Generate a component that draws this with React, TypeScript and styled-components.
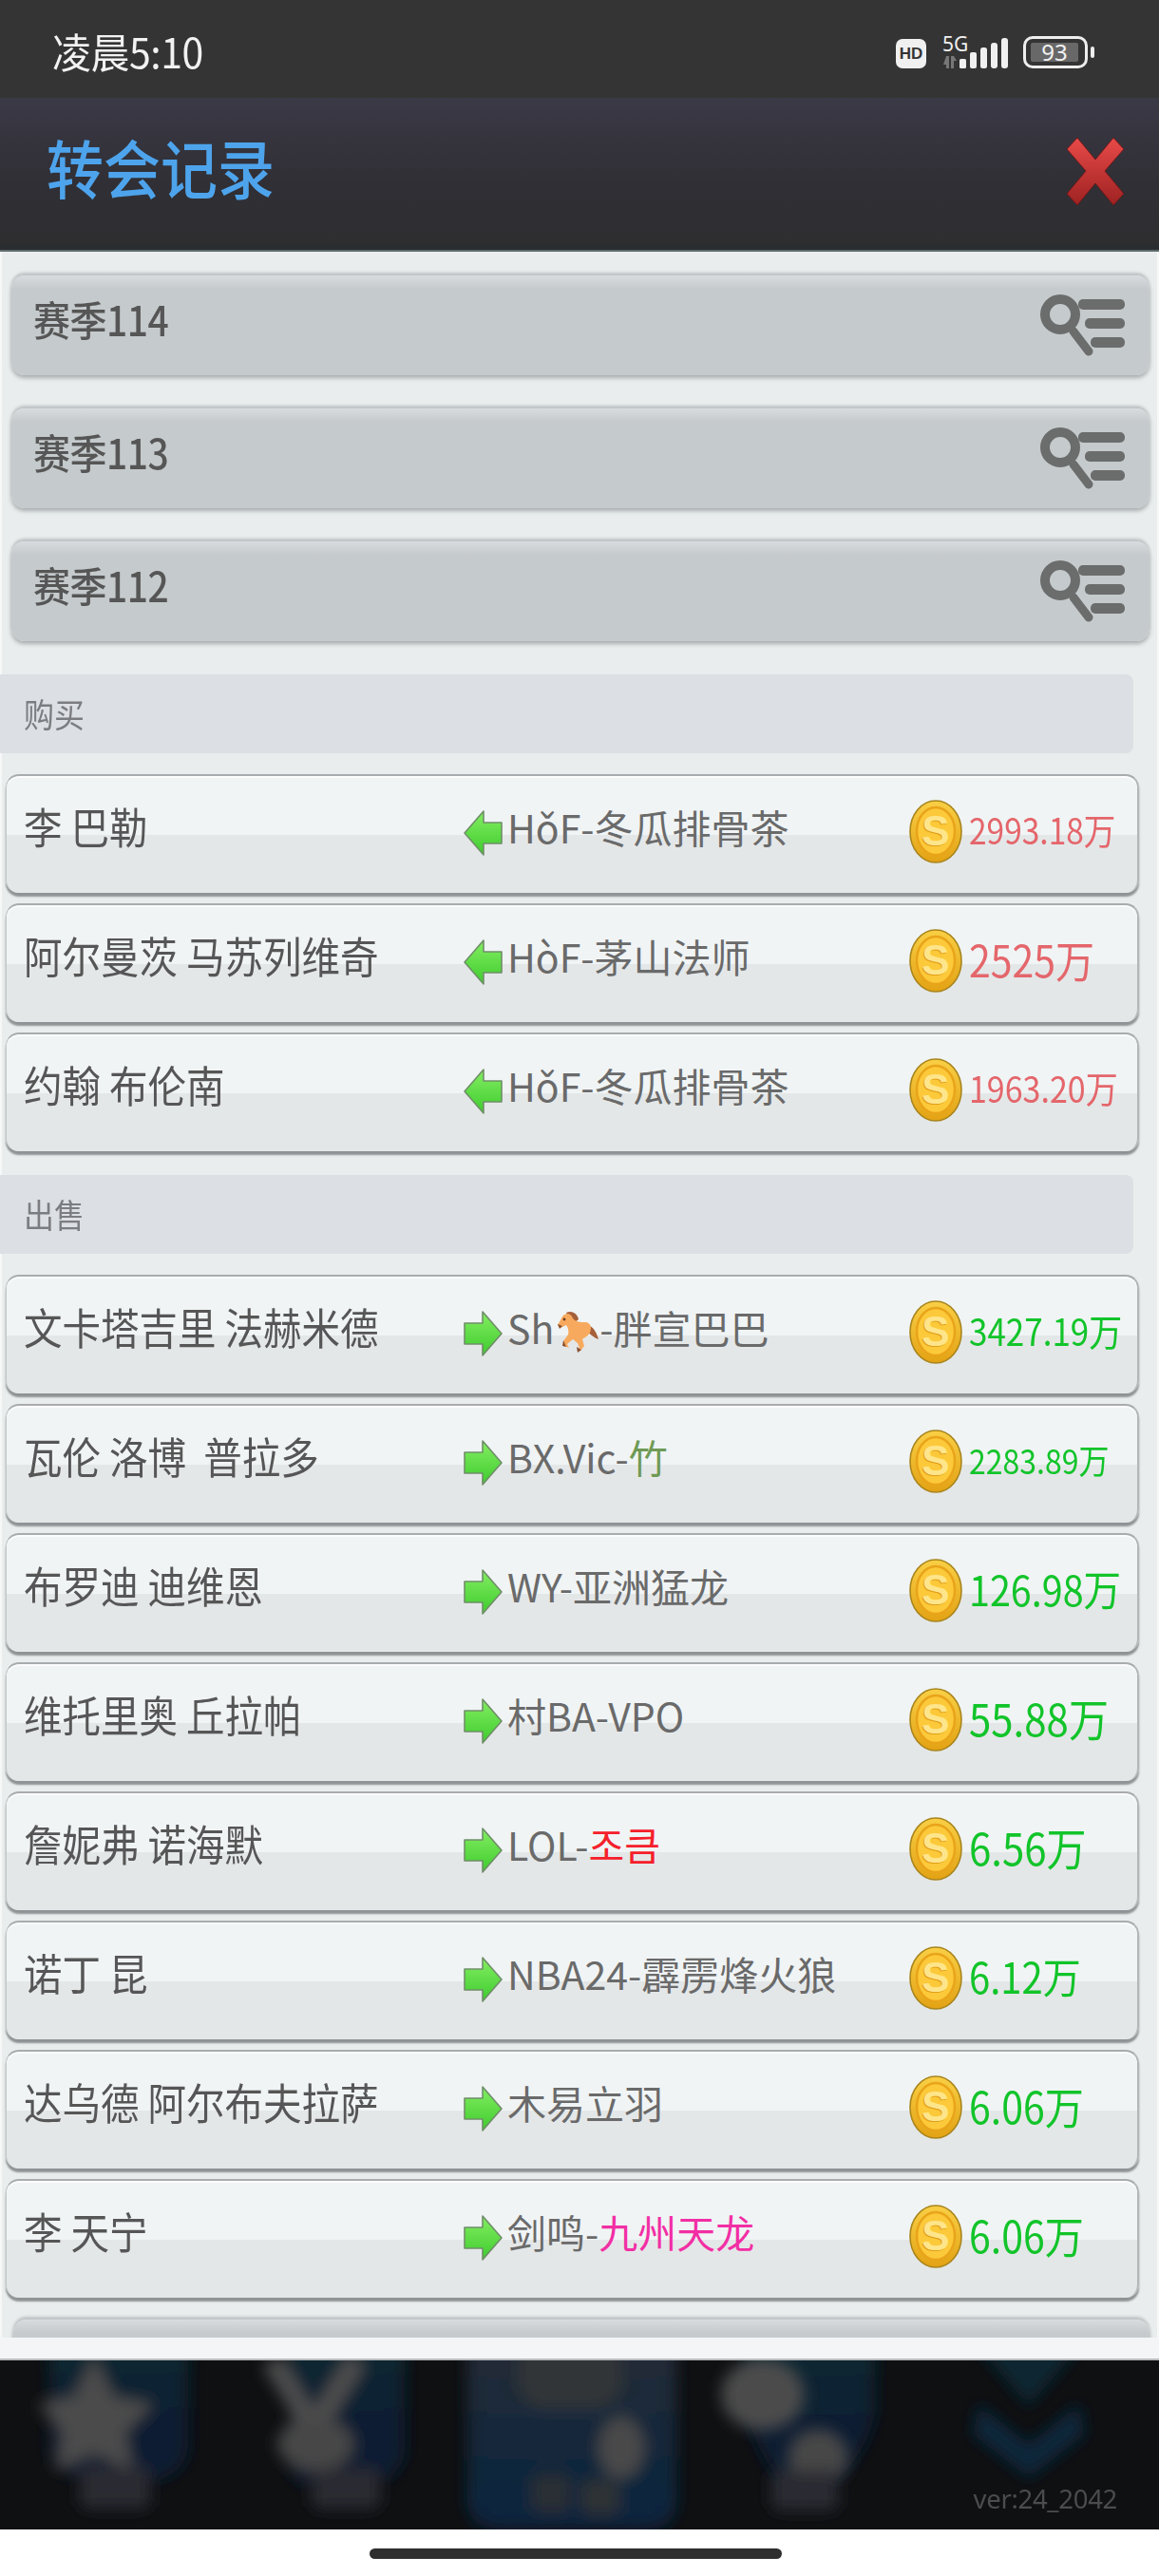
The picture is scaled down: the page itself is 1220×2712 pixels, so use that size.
import { createGlobalStyle } from "styled-components";
import styled from "styled-components";

const GlobalStyle = createGlobalStyle`
  html, body {
    margin: 0;
    padding: 0;
    background: #fff;
  }
  body {
    font-family: "Noto Sans CJK SC", "Noto Sans", sans-serif;
  }
`;

type Row = {
  name: string;
  team: string;
  tag?: string;
  tagColor?: string;
  horse?: boolean;
  price: string;
  priceSize: number;
};

const bought: Row[] = [
  { name: "李 巴勒", team: "HǒF-冬瓜排骨茶", price: "2993.18万", priceSize: 33.5 },
  { name: "阿尔曼茨 马苏列维奇", team: "HòF-茅山法师", price: "2525万", priceSize: 41 },
  { name: "约翰 布伦南", team: "HǒF-冬瓜排骨茶", price: "1963.20万", priceSize: 34 },
];

const sold: Row[] = [
  { name: "文卡塔吉里 法赫米德", team: "Sh", horse: true, tag: "-胖宣巴巴", price: "3427.19万", priceSize: 35 },
  { name: "瓦伦 洛博  普拉多", team: "BX.Vic-", tag: "竹", tagColor: "#6f9a55", price: "2283.89万", priceSize: 32 },
  { name: "布罗迪 迪维恩", team: "WY-亚洲猛龙", price: "126.98万", priceSize: 39.5 },
  { name: "维托里奥 丘拉帕", team: "村BA-VPO", price: "55.88万", priceSize: 42 },
  { name: "詹妮弗 诺海默", team: "LOL-", tag: "조큼", tagColor: "#f5202a", price: "6.56万", priceSize: 42 },
  { name: "诺丁 昆", team: "NBA24-霹雳烽火狼", price: "6.12万", priceSize: 40 },
  { name: "达乌德 阿尔布夫拉萨", team: "木易立羽", price: "6.06万", priceSize: 41 },
  { name: "李 天宁", team: "剑鸣-", tag: "九州天龙", tagColor: "#f22fa4", price: "6.06万", priceSize: 41 },
];

const CloseIcon = () => (
  <svg width="60" height="72" viewBox="0 0 60 72">
    <defs>
      <linearGradient id="closeFill" x1="0" y1="0" x2="0" y2="1">
        <stop offset="0" stopColor="#e84a48" />
        <stop offset="1" stopColor="#9e2222" />
      </linearGradient>
    </defs>
    <path
      d="M11 1 L30 24 L49 1 L60 13 L40 36 L60 60 L49 72 L30 49 L11 72 L0 60 L20 36 L0 13 Z"
      fill="url(#closeFill)"
      stroke="#6d1a1a"
      strokeWidth="1"
    />
  </svg>
);

const SearchListIcon = () => (
  <svg width="89" height="65" viewBox="0 0 89 65" fill="#6b6c6c">
    <rect x="40" y="5" width="49" height="11" rx="5" />
    <rect x="47" y="25" width="42" height="11" rx="5" />
    <rect x="53" y="45" width="36" height="11" rx="5" />
    <circle cx="21" cy="21" r="16" fill="#c5cacc" stroke="#6b6c6c" strokeWidth="10" />
    <line x1="35" y1="39" x2="51" y2="60" stroke="#6b6c6c" strokeWidth="9" strokeLinecap="round" />
  </svg>
);

const ArrowIcon = ({ left }: { left?: boolean }) => (
  <svg width="41" height="48" viewBox="0 0 41 48">
    <defs>
      <linearGradient id="arrowFill" x1="0" y1="0" x2="0" y2="1">
        <stop offset="0" stopColor="#84ee62" />
        <stop offset="1" stopColor="#3ecb2e" />
      </linearGradient>
    </defs>
    <path
      d={
        left
          ? "M40 13 L21 13 L21 1 L1 24 L21 47 L21 35 L40 35 Z"
          : "M1 13 L20 13 L20 1 L40 24 L20 47 L20 35 L1 35 Z"
      }
      fill="url(#arrowFill)"
      stroke="#6f8f68"
      strokeWidth="1.6"
      strokeLinejoin="round"
    />
  </svg>
);

const CoinIcon = () => (
  <svg width="56" height="67" viewBox="0 0 56 67">
    <defs>
      <linearGradient id="coinEdge" x1="0" y1="0" x2="0" y2="1">
        <stop offset="0" stopColor="#f9cf45" />
        <stop offset="1" stopColor="#e3a214" />
      </linearGradient>
    </defs>
    <ellipse cx="28" cy="33.5" rx="27" ry="32.5" fill="url(#coinEdge)" stroke="#a8851c" strokeWidth="1.6" />
    <ellipse cx="28" cy="33" rx="20" ry="25" fill="#fcc93a" stroke="#e9a41a" strokeWidth="2.5" />
    <text
      x="27"
      y="49"
      textAnchor="middle"
      fontFamily="Liberation Sans, sans-serif"
      fontWeight="700"
      fontSize="44"
      fill="#e29f18"
    >
      S
    </text>
    <text
      x="28"
      y="48"
      textAnchor="middle"
      fontFamily="Liberation Sans, sans-serif"
      fontWeight="700"
      fontSize="44"
      fill="#ffe58a"
    >
      S
    </text>
  </svg>
);

const HorseIcon = () => (
  <svg width="48" height="48" viewBox="0 0 48 48">
    <path d="M36 18 C42 20 45 26 47 33 C43 32 39 28 35 25 Z" fill="#a5603a" />
    <path d="M13 5 C20 2 25 7 26 12 L21 16 L15 9 Z" fill="#a5603a" />
    <path
      d="M9 9 C13 4 18 6 20 11 C23 15 28 15 34 15 C39 16 40 21 38 26 C36 30 32 31 30 33 L32 40 L28 45 L25 37 L20 33 L14 38 L16 42 L11 40 L10 35 L15 28 C16 24 15 21 13 18 L7 21 L4 18 Z"
      fill="#f7aa5e"
    />
    <circle cx="11" cy="12" r="1.4" fill="#6a3a20" />
    <path d="M4 17 L6 22 L9 19 Z" fill="#8a5030" />
    <path d="M10 34 L9 40 L13 41 Z M24 41 L25 47 L29 44 Z" fill="#8a5030" />
  </svg>
);

const SignalIcon = () => (
  <svg width="51" height="32" viewBox="0 0 51 32" fill="#f0f0f0">
    <rect x="0" y="22" width="7" height="10" rx="1.5" />
    <rect x="11" y="15" width="7" height="17" rx="2" />
    <rect x="22" y="10" width="7" height="22" rx="2.5" />
    <rect x="33" y="5" width="7" height="27" rx="3" />
    <rect x="44" y="0" width="7" height="32" rx="3" />
  </svg>
);

const TransferIcon = () => (
  <svg width="16" height="13" viewBox="0 0 16 13" fill="#777">
    <path d="M4 0 L7 0 L7 13 L4 13 L4 9 L1 9 Z" />
    <path d="M9 0 L12 0 L15 5 L12 5 L12 13 L9 13 Z" />
  </svg>
);

const TabsArtwork = () => (
  <svg width="1220" height="178" viewBox="0 0 1220 178">
    <defs>
      <filter id="soft" x="-10%" y="-10%" width="120%" height="120%">
        <feGaussianBlur stdDeviation="8" />
      </filter>
      <linearGradient id="tabBlue" x1="0" y1="0" x2="0" y2="1">
        <stop offset="0" stopColor="#0c2933" />
        <stop offset="0.5" stopColor="#091f33" />
        <stop offset="1" stopColor="#091e32" />
      </linearGradient>
      <linearGradient id="tabActive" x1="0" y1="0" x2="0" y2="1">
        <stop offset="0" stopColor="#262d39" />
        <stop offset="0.6" stopColor="#12263a" />
        <stop offset="1" stopColor="#07243e" />
      </linearGradient>
    </defs>
    <rect width="1220" height="178" fill="#0e1012" />
    <g filter="url(#soft)">
      <path d="M52 -20 H198 V90 Q196 125 150 128 H100 Q52 120 52 90 Z" fill="url(#tabBlue)" />
      <path d="M304 -20 H426 V95 Q424 128 380 130 H320 Q304 125 304 95 Z" fill="url(#tabBlue)" />
      <path d="M1024 -20 H1142 L1083 48 Z" fill="#0b2632" />
      <path d="M1030 46 L1083 88 L1136 46 L1142 78 L1083 124 L1024 78 Z" fill="#09263a" />
      <path d="M786 -20 H921 V55 Q910 110 860 140 H830 Q795 95 786 55 Z" fill="url(#tabBlue)" />

      <path d="M99 -6 L120 38 L162 46 L132 76 L140 116 L99 98 L58 116 L66 76 L40 46 L78 38 Z" fill="#4c4c4c" />
      <rect x="84" y="112" width="74" height="44" rx="8" fill="#2a2c32" />

      <path d="M286 0 L330 72 L375 0" fill="none" stroke="#4d4d4d" strokeWidth="22" />
      <ellipse cx="332" cy="88" rx="40" ry="28" fill="#464646" />
      <rect x="328" y="114" width="72" height="42" rx="8" fill="#2a2c32" />
    </g>
    <g filter="url(#soft)">
      <path d="M492 -20 H712 V150 Q710 178 680 178 H524 Q494 176 492 150 Z" fill="url(#tabActive)" />
      <rect x="545" y="-20" width="110" height="70" rx="30" fill="#333538" />
      <ellipse cx="654" cy="92" rx="24" ry="32" fill="#4a4a4a" />
      <rect x="560" y="120" width="40" height="40" rx="6" fill="#2a2e34" />
      <rect x="612" y="126" width="40" height="36" rx="6" fill="#2d3136" />
      <ellipse cx="803" cy="36" rx="44" ry="38" fill="#4c4c4c" />
      <ellipse cx="861" cy="102" rx="32" ry="30" fill="#464646" />
      <rect x="812" y="116" width="70" height="42" rx="8" fill="#2a2c31" />
    </g>
  </svg>
);

const App = () => (
  <>
    <GlobalStyle />
    <Screen>
      <StatusBar>
        <Clock>凌晨5:10</Clock>
        <StatusIcons>
          <HdBadge>HD</HdBadge>
          <NetworkBlock>
            <NetworkLabel>5G</NetworkLabel>
            <TransferIcon />
          </NetworkBlock>
          <SignalIcon />
          <Battery>
            <BatteryLevel>93</BatteryLevel>
          </Battery>
          <BatteryNub />
        </StatusIcons>
      </StatusBar>

      <Header>
        <Title>转会记录</Title>
        <CloseIcon />
      </Header>

      <Panel>
        <ScrollArea>
          {["赛季114", "赛季113", "赛季112"].map((season) => (
            <SeasonButton key={season}>
              <SeasonLabel>{season}</SeasonLabel>
              <SearchListIcon />
            </SeasonButton>
          ))}

          <SectionBar>
            <SectionLabel>购买</SectionLabel>
          </SectionBar>
          <RowList>
            {bought.map((row) => (
              <TransferRow key={row.name} row={row} left />
            ))}
          </RowList>

          <SectionBar $second>
            <SectionLabel>出售</SectionLabel>
          </SectionBar>
          <RowList>
            {sold.map((row) => (
              <TransferRow key={row.name} row={row} />
            ))}
          </RowList>

          <SeasonButton $cut />
        </ScrollArea>
        <PanelFoot />
      </Panel>

      <TabBand>
        <TabsArtwork />
        <Version>ver:24_2042</Version>
      </TabBand>

      <HomeArea>
        <HomeBar />
      </HomeArea>
    </Screen>
  </>
);

const TransferRow = ({ row, left }: { row: Row; left?: boolean }) => (
  <RowCard>
    <Name>{row.name}</Name>
    <TeamCell>
      <ArrowIcon left={left} />
      <Team>
        {row.team}
        {row.horse && <HorseIcon />}
        {row.tag && <Tag $color={row.tagColor}>{row.tag}</Tag>}
      </Team>
    </TeamCell>
    <PriceCell>
      <CoinIcon />
      <Price $size={row.priceSize} $sold={!left}>
        {row.price}
      </Price>
    </PriceCell>
  </RowCard>
);

const Screen = styled.div`
  width: 1220px;
  height: 2712px;
  display: flex;
  flex-direction: column;
  overflow: hidden;
`;

const StatusBar = styled.div`
  height: 103px;
  flex: none;
  background: #343434;
  display: flex;
  justify-content: space-between;
  align-items: flex-start;
  padding: 38px 68px 0 55px;
  box-sizing: border-box;
`;

const Clock = styled.div`
  margin-top: -3px;
  color: #f2f2f2;
  font-size: 41px;
  line-height: 36px;
  letter-spacing: -0.5px;
  transform: scaleY(1.05);
`;

const StatusIcons = styled.div`
  display: flex;
  align-items: flex-end;
  height: 34px;
`;

const HdBadge = styled.div`
  width: 32px;
  height: 31px;
  margin-right: 17px;
  border-radius: 7px;
  background: #f0f0f0;
  color: #343434;
  font-family: "Liberation Sans", sans-serif;
  font-size: 17px;
  font-weight: 700;
  line-height: 31px;
  text-align: center;
`;

const NetworkBlock = styled.div`
  width: 30px;
  display: flex;
  flex-direction: column;
  align-items: flex-start;
  gap: 4px;
  margin-right: -12px;
`;

const NetworkLabel = styled.div`
  color: #f0f0f0;
  font-family: "Noto Sans", sans-serif;
  font-size: 21px;
  line-height: 17px;
`;

const Battery = styled.div`
  width: 68px;
  height: 34px;
  margin-left: 16px;
  box-sizing: border-box;
  border: 3px solid #eeeeee;
  border-radius: 10px;
  padding: 4px 7px 4px 5px;
`;

const BatteryLevel = styled.div`
  height: 100%;
  background: #686868;
  border-radius: 2px;
  color: #f2f2f2;
  font-family: "Noto Sans", sans-serif;
  font-size: 24px;
  line-height: 20px;
  text-align: center;
`;

const BatteryNub = styled.div`
  width: 4px;
  height: 12px;
  margin: 0 0 11px 3px;
  border-radius: 2px;
  background: #eeeeee;
`;

const Header = styled.div`
  height: 160px;
  flex: none;
  box-sizing: border-box;
  padding: 0 37px 0 49px;
  background: linear-gradient(#3a3946, #302f35 60%, #2e2e31);
  border-bottom: 7px solid #2a2d2f;
  display: flex;
  align-items: center;
  justify-content: space-between;
`;

const Title = styled.div`
  margin-bottom: 10px;
  color: #4ea4ec;
  font-size: 60px;
  font-weight: 500;
  line-height: 70px;
  transform: scaleY(1.12);
`;

const Panel = styled.div`
  height: 2222px;
  flex: none;
  display: flex;
  flex-direction: column;
  background: #e9eded;
  box-shadow: inset 2px 0 0 #f6f7f7, inset -2px 0 0 #f6f7f7;
  border-top: 2px solid #5f6a6c;
  box-sizing: border-box;
`;

const ScrollArea = styled.div`
  height: 2196px;
  flex: none;
  overflow: hidden;
  padding-top: 25px;
  box-sizing: border-box;
`;

const PanelFoot = styled.div`
  flex: 1;
  background: #f3f5f6;
  border-bottom: 2px solid #b9bcbd;
`;

const SeasonButton = styled.div<{ $cut?: boolean }>`
  height: 105px;
  margin: ${({ $cut }) => ($cut ? "23px 10px 0 14px" : "0 10px 35px 12px")};
  box-sizing: border-box;
  padding: 0 26px 0 23px;
  display: flex;
  align-items: center;
  justify-content: space-between;
  border-radius: 14px;
  background: linear-gradient(#d9dcde, #c5cacc 14px);
  box-shadow: 0 -3px 3px #bfc3c5, 0 3px 4px #a9adaf;
`;

const SeasonLabel = styled.div`
  color: #565656;
  font-size: 39px;
  font-weight: 500;
  letter-spacing: -0.5px;
  line-height: 50px;
  margin-bottom: 15px;
  transform: scaleY(1.12);
`;

const SectionBar = styled.div<{ $second?: boolean }>`
  width: 1193px;
  height: 83px;
  margin: ${({ $second }) => ($second ? "25px 0 22px" : "0 0 22px")};
  box-sizing: border-box;
  padding: 0 0 2px 25px;
  display: flex;
  align-items: center;
  background: #dcdfe3;
  border-radius: 0 8px 8px 0;
`;

const SectionLabel = styled.div`
  color: #7b7d80;
  font-size: 32px;
  line-height: 40px;
  transform: scaleY(1.1);
`;

const RowList = styled.div`
  display: flex;
  flex-direction: column;
  gap: 11px;
`;

const RowCard = styled.div`
  height: 125px;
  margin: 0 21px 0 6px;
  box-sizing: border-box;
  padding: 0 0 16px 18px;
  display: grid;
  grid-template-columns: 463px 469px 1fr;
  align-items: center;
  border-radius: 14px;
  border-top: 2px solid #a9acae;
  border-left: 1px solid #c4c7c8;
  border-right: 2px solid #b4b7b8;
  background: linear-gradient(#f0f4f5 50%, #e4e7e8 50%);
  box-shadow: inset 0 2px 0 #fbfcfc, 0 4px 2px #8f9395;
`;

const Name = styled.div`
  margin-bottom: 2px;
  color: #565656;
  font-size: 40.5px;
  line-height: 50px;
  white-space: pre;
  transform: scaleY(1.12);
`;

const TeamCell = styled.div`
  display: flex;
  align-items: center;
  gap: 5px;
  padding-top: 12px;
`;

const Team = styled.div`
  display: flex;
  align-items: center;
  margin-top: -14px;
  color: #6a6a6a;
  font-size: 41px;
  line-height: 50px;
  white-space: pre;

  svg {
    flex: none;
    margin-top: 8px;
  }
`;

const Tag = styled.span<{ $color?: string }>`
  color: ${({ $color }) => $color ?? "inherit"};
`;

const PriceCell = styled.div`
  display: flex;
  align-items: center;
  gap: 7px;
  padding-top: 10px;
`;

const Price = styled.div<{ $size: number; $sold: boolean }>`
  margin-top: -6px;
  color: ${({ $sold }) => ($sold ? "#12c42a" : "#e4666b")};
  font-size: ${({ $size }) => $size}px;
  line-height: 50px;
  white-space: nowrap;
  transform: scaleY(1.12);
`;

const TabBand = styled.div`
  height: 178px;
  flex: none;
  position: relative;
  overflow: hidden;

  svg {
    display: block;
  }
`;

const Version = styled.div`
  position: absolute;
  right: 44px;
  bottom: 15px;
  color: #4b4c4e;
  font-family: "Noto Sans", sans-serif;
  font-size: 27.5px;
  line-height: 34px;
  letter-spacing: -0.3px;
  filter: blur(0.6px);
`;

const HomeArea = styled.div`
  flex: 1;
  background: #fff;
  padding-top: 20px;
  box-sizing: border-box;
`;

const HomeBar = styled.div`
  width: 434px;
  height: 11px;
  margin: 0 0 0 389px;
  border-radius: 6px;
  background: #2f2f2f;
`;

export default App;
